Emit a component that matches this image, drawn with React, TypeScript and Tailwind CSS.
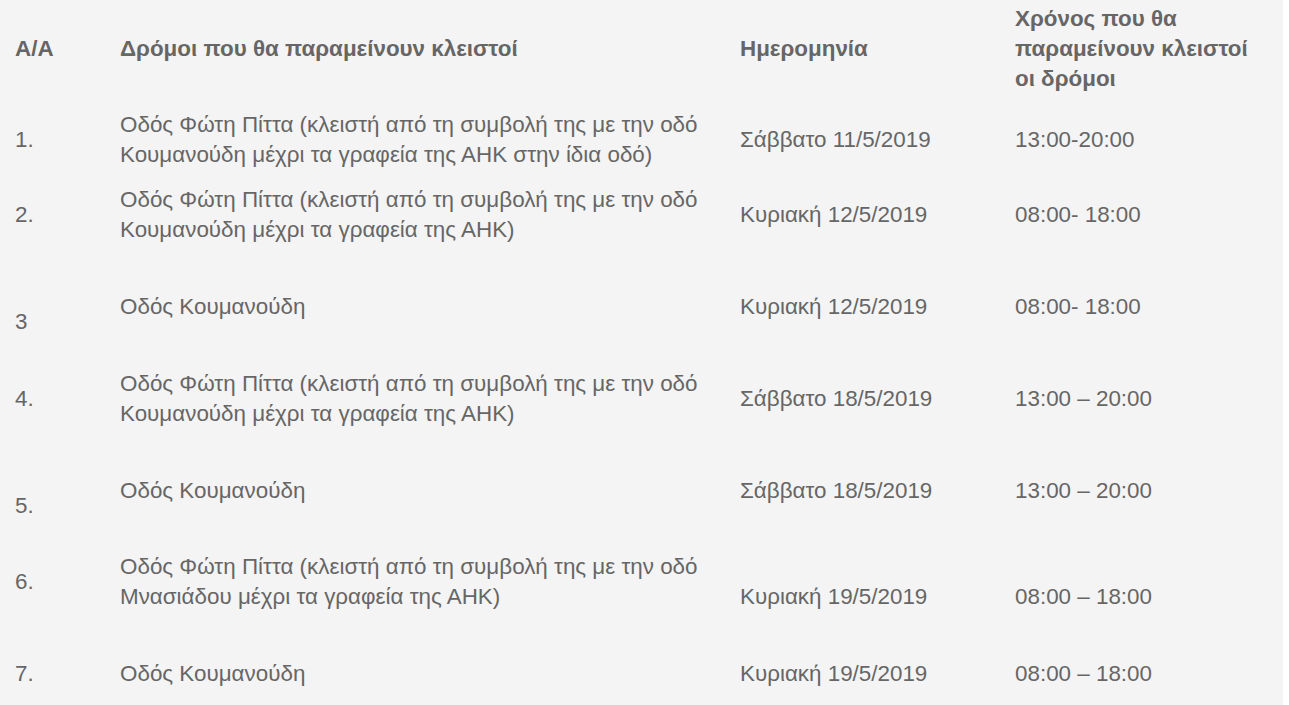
const rows = [
  { n: ['1.'], road: ['Οδός Φώτη Πίττα (κλειστή από τη συμβολή της με την οδό', 'Κουμανούδη μέχρι τα γραφεία της ΑΗΚ στην ίδια οδό)'], date: ['Σάββατο 11/5/2019'], time: ['13:00-20:00'], h: 'h-[84px]' },
  { n: ['2.'], road: ['Οδός Φώτη Πίττα (κλειστή από τη συμβολή της με την οδό', 'Κουμανούδη μέχρι τα γραφεία της ΑΗΚ)'], date: ['Κυριακή 12/5/2019'], time: ['08:00- 18:00'], h: 'h-[66px]' },
  { n: ['\u00a0', '3'], road: ['Οδός Κουμανούδη'], date: ['Κυριακή 12/5/2019'], time: ['08:00- 18:00'], h: 'h-[118px]' },
  { n: ['4.'], road: ['Οδός Φώτη Πίττα (κλειστή από τη συμβολή της με την οδό', 'Κουμανούδη μέχρι τα γραφεία της ΑΗΚ)'], date: ['Σάββατο 18/5/2019'], time: ['13:00 – 20:00'], h: 'h-[66px]' },
  { n: ['\u00a0', '5.'], road: ['Οδός Κουμανούδη'], date: ['Σάββατο 18/5/2019'], time: ['13:00 – 20:00'], h: 'h-[118px]' },
  { n: ['6.'], road: ['Οδός Φώτη Πίττα (κλειστή από τη συμβολή της με την οδό', 'Μνασιάδου μέχρι τα γραφεία της ΑΗΚ)'], date: ['\u00a0', 'Κυριακή 19/5/2019'], time: ['\u00a0', '08:00 – 18:00'], h: 'h-[64px]' },
  { n: ['7.'], road: ['Οδός Κουμανούδη'], date: ['Κυριακή 19/5/2019'], time: ['08:00 – 18:00'], h: 'h-[120px]' },
];

const Lines = ({ lines }: { lines: string[] }) => (
  <>
    {lines.map((l, i) => (
      <span key={i}>
        {i > 0 && <br />}
        {l}
      </span>
    ))}
  </>
);

export default function App() {
  return (
    <div className="w-[1289px] h-[705px] overflow-hidden bg-white">
      <div className="w-[1283px] h-full bg-[#f4f4f4] text-[#666666] text-[22.4px] leading-[30px] font-['Liberation_Sans',Arial,sans-serif]">
        <table className="w-full table-fixed border-collapse">
          <colgroup>
            <col className="w-[105px]" />
            <col className="w-[620px]" />
            <col className="w-[275px]" />
            <col />
          </colgroup>
          <thead>
            <tr className="h-[98px] font-bold text-left">
              <th className="pl-[15px] align-middle font-bold">A/A</th>
              <th className="pl-[15px] align-middle font-bold whitespace-nowrap">Δρόμοι που θα παραμείνουν κλειστοί</th>
              <th className="pl-[15px] align-middle font-bold">Ημερομηνία</th>
              <th className="pl-[15px] align-middle font-bold whitespace-nowrap">
                Χρόνος που θα
                <br />
                παραμείνουν κλειστοί
                <br />
                οι δρόμοι
              </th>
            </tr>
          </thead>
          <tbody>
            {rows.map((r, i) => (
              <tr key={i} className={r.h}>
                <td className="pl-[15px] align-middle"><Lines lines={r.n} /></td>
                <td className="pl-[15px] align-middle whitespace-nowrap"><Lines lines={r.road} /></td>
                <td className="pl-[15px] align-middle whitespace-nowrap"><Lines lines={r.date} /></td>
                <td className="pl-[15px] align-middle whitespace-nowrap"><Lines lines={r.time} /></td>
              </tr>
            ))}
          </tbody>
        </table>
      </div>
    </div>
  );
}
